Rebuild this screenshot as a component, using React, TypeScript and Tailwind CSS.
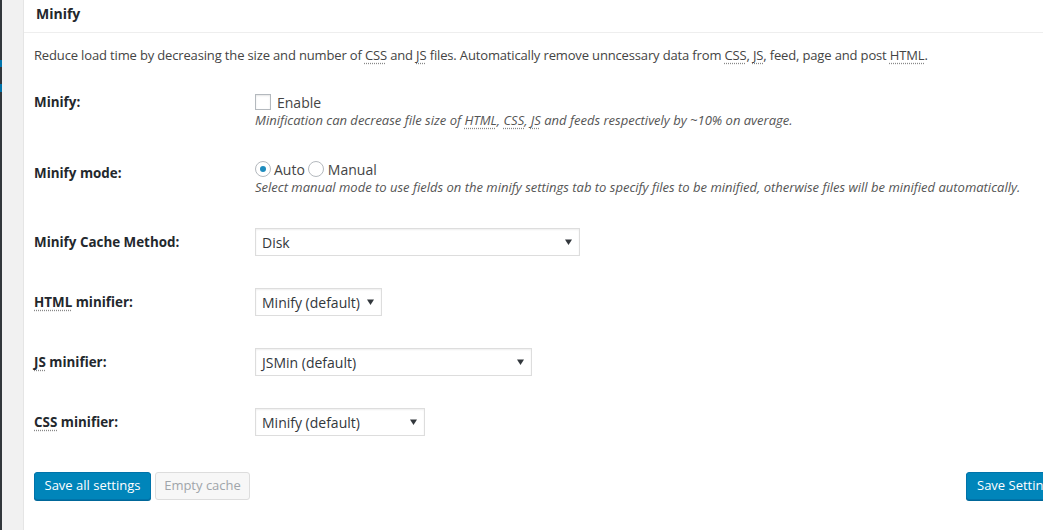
import React from 'react';

const font = "font-['Open_Sans',sans-serif]";

function Abbr({ children }: { children: React.ReactNode }) {
  return (
    <span className="underline decoration-dotted decoration-[#888] underline-offset-[3px]">
      {children}
    </span>
  );
}

function Select({ value, width }: { value: string; width: string }) {
  return (
    <div
      className={`${width} h-[28px] flex items-center justify-between border border-[#ddd] bg-white pl-[6px] pr-[7px] text-[14px] text-[#32373c] shadow-[inset_0_1px_2px_rgba(0,0,0,0.07)]`}
    >
      <span>{value}</span>
      <svg width="7" height="6" viewBox="0 0 7 6">
        <path d="M0 0.5h7L3.5 6z" fill="#32373c" />
      </svg>
    </div>
  );
}

function Row({
  label,
  children,
  className = '',
}: {
  label: React.ReactNode;
  children: React.ReactNode;
  className?: string;
}) {
  return (
    <div className={`flex items-center ${className}`}>
      <div className="w-[221px] text-[13.4px] font-bold text-[#23282d]">{label}</div>
      {children}
    </div>
  );
}

export default function App() {
  return (
    <div className={`flex h-[530px] w-full overflow-hidden bg-[#f1f1f1] ${font}`}>
      {/* admin menu edge */}
      <div className="relative w-[2px] bg-[#32373c]">
        <div className="absolute left-0 top-[60px] h-[7px] w-[2px] bg-[#0073aa]" />
        <div className="absolute left-0 top-[84px] h-[8px] w-[2px] bg-[#0073aa]" />
      </div>
      <div className="w-[21px]" />

      {/* panel */}
      <div className="flex-1 min-w-0 border-l border-[#e5e5e5] bg-white">
        <div className="h-[33px] border-b border-[#eee] pl-[12px] pt-[4px]">
          <h2 className="text-[14px] font-bold leading-[19px] text-[#23282d]">Minify</h2>
        </div>

        <div className="pl-[10px] text-[13px] text-[#444]">
          <p className="mt-[13px] leading-[19px] whitespace-nowrap tracking-[-0.15px]">
            Reduce load time by decreasing the size and number of <Abbr>CSS</Abbr> and{' '}
            <Abbr>JS</Abbr> files. Automatically remove unncessary data from <Abbr>CSS</Abbr>,{' '}
            <Abbr>JS</Abbr>, feed, page and post <Abbr>HTML</Abbr>.
          </p>

          {/* Minify */}
          <div className="mt-[28px] flex items-start">
            <div className="w-[221px] text-[13.4px] font-bold leading-[18px] text-[#23282d]">
              Minify:
            </div>
            <div>
              <div className="flex h-[18px] items-center">
                <span className="h-[16px] w-[16px] border border-[#b4b9be] bg-white shadow-[inset_0_1px_2px_rgba(0,0,0,0.1)]" />
                <span className="ml-[6px] text-[14px] text-[#444]">Enable</span>
              </div>
              <p className="text-[13px] italic leading-[19px] text-[#555] whitespace-nowrap">
                Minification can decrease file size of <Abbr>HTML</Abbr>, <Abbr>CSS</Abbr>,{' '}
                <Abbr>JS</Abbr> and feeds respectively by ~10% on average.
              </p>
            </div>
          </div>

          {/* Minify mode */}
          <div className="mt-[30px] flex items-start">
            <div className="mt-[4px] w-[221px] text-[13.4px] font-bold leading-[18px] text-[#23282d]">
              Minify mode:
            </div>
            <div>
              <div className="flex h-[18px] items-center text-[14px] text-[#444]">
                <span className="flex h-[16px] w-[16px] items-center justify-center rounded-full border border-[#b4b9be] bg-white">
                  <span className="h-[6px] w-[6px] rounded-full bg-[#1e8cbe]" />
                </span>
                <span className="ml-[3px]">Auto</span>
                <span className="ml-[3px] h-[16px] w-[16px] rounded-full border border-[#b4b9be] bg-white" />
                <span className="ml-[4px]">Manual</span>
              </div>
              <p className="mt-[1px] text-[13px] italic leading-[17px] text-[#555] whitespace-nowrap">
                Select manual mode to use fields on the minify settings tab to specify files to be
                minified, otherwise files will be minified automatically.
              </p>
            </div>
          </div>

          <Row label="Minify Cache Method:" className="mt-[32px]">
            <Select value="Disk" width="w-[325px]" />
          </Row>
          <Row
            label={
              <>
                <Abbr>HTML</Abbr> minifier:
              </>
            }
            className="mt-[32px]"
          >
            <Select value="Minify (default)" width="w-[127px]" />
          </Row>
          <Row
            label={
              <>
                <Abbr>JS</Abbr> minifier:
              </>
            }
            className="mt-[32px]"
          >
            <Select value="JSMin (default)" width="w-[277px]" />
          </Row>
          <Row
            label={
              <>
                <Abbr>CSS</Abbr> minifier:
              </>
            }
            className="mt-[32px]"
          >
            <Select value="Minify (default)" width="w-[170px]" />
          </Row>

          <div className="mt-[36px] flex items-center">
            <button className="h-[28px] w-[117px] rounded-[3px] border border-[#0073aa] bg-[#0085ba] text-[13px] text-white shadow-[0_1px_0_#006799]">
              Save all settings
            </button>
            <button className="ml-[4px] h-[28px] w-[95px] rounded-[3px] border border-[#ddd] bg-[#f7f7f7] text-[13px] text-[#a0a5aa]">
              Empty cache
            </button>
            <div className="flex-1" />
            <button className="-mr-[40px] h-[28px] w-[117px] shrink-0 whitespace-nowrap rounded-[3px] border border-[#0073aa] bg-[#0085ba] pl-[10px] text-left text-[13px] text-white shadow-[0_1px_0_#006799]">
              Save Settings
            </button>
          </div>
        </div>
      </div>
    </div>
  );
}
